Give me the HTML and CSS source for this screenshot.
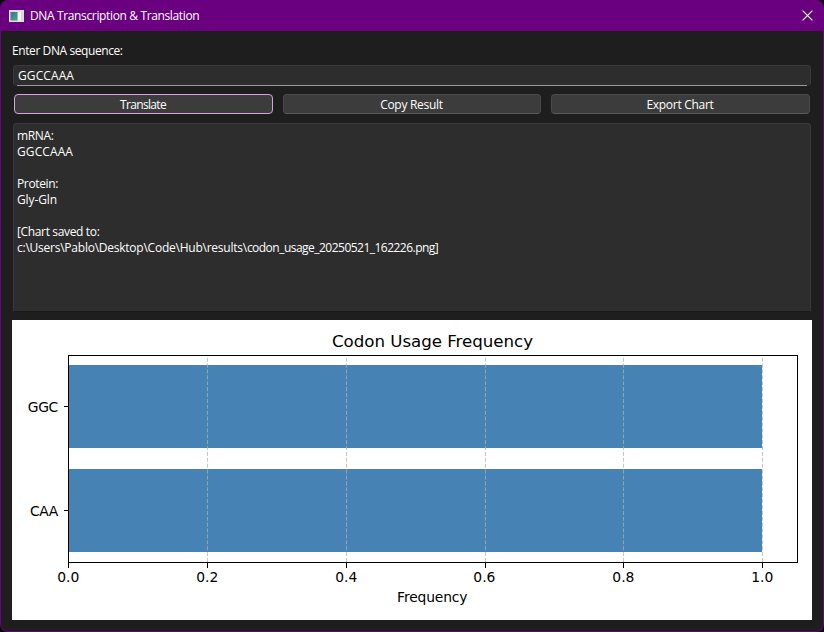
FILE: index.html
```html
<!DOCTYPE html>
<html lang="en">
<head>
<meta charset="utf-8">
<title>DNA Transcription &amp; Translation</title>
<link rel="stylesheet" href="styles.css">
</head>
<body>
<div class="window">
  <header class="titlebar">
    <svg class="app-icon" width="15" height="12" viewBox="0 0 15 12">
      <defs><linearGradient id="pane" x1="0" y1="0" x2="1" y2="1"><stop offset="0" stop-color="#426f9b"/><stop offset="1" stop-color="#51a477"/></linearGradient></defs>
      <rect width="15" height="12" fill="#dedede"/>
      <rect x="1.5" y="2" width="7" height="8.5" fill="url(#pane)"/>
      <rect x="9" y="2" width="3" height="8.5" fill="#f4f4f4"/>
      <rect x="12.5" y="2" width="1" height="8.5" fill="#c5d2cb"/>
    </svg>
    <span class="title">DNA Transcription &amp; Translation</span>
    <svg class="close" width="11" height="11" viewBox="0 0 11 11"><path d="M.6.6 10.4 10.4M10.4.6.6 10.4" stroke="#fff" stroke-width="1.1" fill="none"/></svg>
  </header>
  <main class="content">
    <label class="prompt">Enter DNA sequence:</label>
    <div class="field"><span class="sequence">GGCCAAA</span></div>
    <div class="buttons">
      <button class="btn focused">Translate</button>
      <button class="btn">Copy Result</button>
      <button class="btn">Export Chart</button>
    </div>
    <div class="output">
      <div class="line">mRNA:</div>
      <div class="line sequence">GGCCAAA</div>
      <div class="line"></div>
      <div class="line">Protein:</div>
      <div class="line residues">Gly-Gln</div>
      <div class="line"></div>
      <div class="line">[Chart saved to:</div>
      <div class="line"><span class="folder">c:\Users\Pablo\Desktop\Code\Hub\results\</span><span class="file">codon_usage_20250521_162226.png]</span></div>
    </div>
    <svg class="chart" width="800" height="300" viewBox="0 0 800 300">
      <rect width="800" height="300" fill="#fff"/>
      <g fill="#4682b4" shape-rendering="crispEdges">
        <rect x="56" y="45" width="694" height="83"/>
        <rect x="56" y="149" width="694" height="83"/>
      </g>
      <path class="grid" d="M195.5 242V36M334.5 242V36M473.5 242V36M611.5 242V36M750.5 242V36"/>
      <path class="axis" d="M56.5 35.5H785.5V242.5H56.5ZM56.5 242.5v5M195.5 242.5v5M334.5 242.5v5M473.5 242.5v5M611.5 242.5v5M750.5 242.5v5M56.5 86.5h-5M56.5 190.5h-5"/>
      <text class="chart-title" x="420.5" y="27" textLength="201">Codon Usage Frequency</text>
      <g class="ticks">
        <text x="56.3" y="262">0.0</text>
        <text x="195.2" y="262">0.2</text>
        <text x="334.2" y="262">0.4</text>
        <text x="472.4" y="262">0.6</text>
        <text x="611.4" y="262">0.8</text>
        <text x="750.2" y="262">1.0</text>
        <text x="420.3" y="282" textLength="70.5">Frequency</text>
      </g>
      <g class="codons">
        <text x="46.3" y="92" textLength="30.5">GGC</text>
        <text x="46.3" y="196" textLength="28.3">CAA</text>
      </g>
    </svg>
  </main>
</div>
</body>
</html>
```
FILE: styles.css
```css
* { box-sizing: border-box; }
html { background: #0a0a0a; }
body {
  margin: 0;
  font: 12px/16px "Open Sans", "Noto Sans", sans-serif;
  color: #fff;
}
.window {
  width: 824px;
  height: 632px;
  background: #1e1e1e;
  border: 1px solid #6a0080;
  border-top: 0;
  border-radius: 8px;
  overflow: hidden;
}
.titlebar {
  display: flex;
  align-items: center;
  height: 31px;
  padding: 0 10px 0 8px;
  background: #6a0080;
}
.title { margin-left: 6px; flex: 1; letter-spacing: -0.36px; white-space: nowrap; }
.content {
  display: flex;
  flex-direction: column;
  padding: 12px 11px 0;
}
.prompt { letter-spacing: -0.41px; }
.field {
  height: 21px;
  margin: 6px 1px 0;
  padding: 2px 4px;
  line-height: 16px;
  background: linear-gradient(#999, #999) 4px 100% / calc(100% - 8px) 1px no-repeat, #2d2d2d;
  background-origin: border-box;
  border: 1px solid #3a3a3a;
  border-bottom: 0;
  border-radius: 4px;
}
.buttons {
  display: grid;
  grid-template-columns: 259px 258px 259px;
  column-gap: 10px;
  margin: 8px 2px 0;
}
.btn {
  display: flex;
  justify-content: center;
  align-items: center;
  height: 20px;
  padding: 1px 1px 0 0;
  font: inherit;
  color: #fff;
  letter-spacing: -0.28px;
  background: #3c3c3c;
  border: 1px solid #4a4a4a;
  border-bottom-color: #5a5a5a;
  border-radius: 4px;
}
.focused { border-color: #dd9be8; letter-spacing: -0.65px; }
.output {
  height: 189px;
  margin: 9px 1px 0;
  padding: 4px 3px;
  background: #2d2d2d;
  border: 1px solid #3a3a3a;
  border-bottom-color: #191919;
  border-radius: 4px 4px 2px 2px;
}
.line { height: 16px; letter-spacing: -0.35px; white-space: nowrap; }
.sequence { letter-spacing: 0.1px; }
.residues { letter-spacing: -0.1px; }
.folder { letter-spacing: -0.24px; }
.file { letter-spacing: -0.52px; }
.chart { display: block; margin-top: 8px; }
.grid {
  stroke: #b0b0b0;
  stroke-opacity: .7;
  stroke-width: 1.11;
  stroke-dasharray: 4.11 1.78;
}
.axis { fill: none; stroke: #000; stroke-width: 1.11; shape-rendering: crispEdges; }
.chart text { font-family: "DejaVu Sans", sans-serif; fill: #000; text-anchor: middle; }
.chart-title { font-size: 16.67px; }
.ticks text { font-size: 13.89px; }
.chart .codons text { font-size: 13.89px; text-anchor: end; }
```
